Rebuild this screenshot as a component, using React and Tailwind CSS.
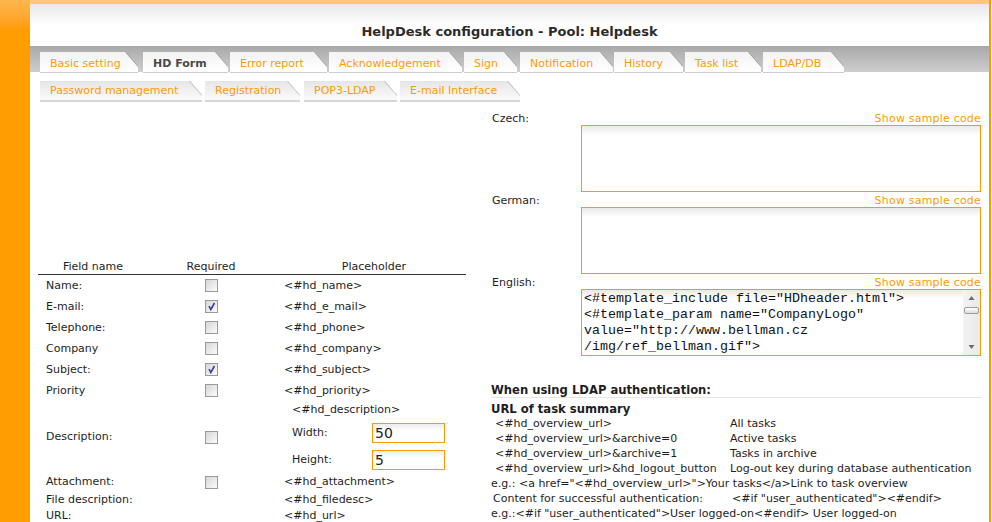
import React from 'react';

const font = "font-['DejaVu_Sans','Liberation_Sans',sans-serif]";

const tabsTop = [
  { label: 'Basic setting', cls: 'ml-[10px] w-[98px]' },
  { label: 'HD Form', cls: 'ml-[5px] w-[85px]', active: true },
  { label: 'Error report', cls: 'ml-[2px] w-[97px]' },
  { label: 'Acknowledgement', cls: 'ml-[2px] w-[133px]' },
  { label: 'Sign', cls: 'ml-[2px] w-[53px]' },
  { label: 'Notification', cls: 'ml-[3px] w-[93px]' },
  { label: 'History', cls: 'ml-[1px] w-[69px]' },
  { label: 'Task list', cls: 'ml-[2px] w-[76px]' },
  { label: 'LDAP/DB', cls: 'ml-[2px] w-[81px]' },
];

const tabsBottom = [
  { label: 'Password management', cls: 'ml-[10px] w-[162px]' },
  { label: 'Registration', cls: 'ml-[3px] w-[95px]' },
  { label: 'POP3-LDAP', cls: 'ml-[4px] w-[93px]' },
  { label: 'E-mail Interface', cls: 'ml-[3px] w-[120px]' },
];

const fields = [
  { label: 'Name:', code: '<#hd_name>', check: false },
  { label: 'E-mail:', code: '<#hd_e_mail>', check: true },
  { label: 'Telephone:', code: '<#hd_phone>', check: false },
  { label: 'Company', code: '<#hd_company>', check: false },
  { label: 'Subject:', code: '<#hd_subject>', check: true },
  { label: 'Priority', code: '<#hd_priority>', check: false },
];

const ldapRows = [
  ['<#hd_overview_url>', 'All tasks'],
  ['<#hd_overview_url>&archive=0', 'Active tasks'],
  ['<#hd_overview_url>&archive=1', 'Tasks in archive'],
  ['<#hd_overview_url>&hd_logout_button', 'Log-out key during database authentication'],
];

// záložka se zahnutým rohem
const Tab = ({ tab, upper }) => (
  <div
    className={`relative h-[21px] shrink-0 pl-[10px] flex items-center text-[11px] whitespace-nowrap [clip-path:polygon(0_0,calc(100%-12px)_0,100%_14px,100%_100%,0_100%)] ${tab.cls} ${
      upper
        ? 'pt-[4px] bg-gradient-to-b from-[#f3f3f3] to-[#ffffff] border-b border-[#cdcdcd]'
        : 'pt-[2px] bg-gradient-to-b from-[#e6e6e6] to-[#fbfbfb] border-b-2 border-[#d6d6d6]'
    } ${tab.active ? 'font-bold text-[#4a4a4a]' : 'text-[#ff9a00]'}`}
  >
    {tab.label}
    <svg className="absolute top-0 right-0 w-[13px] h-[15px]" viewBox="0 0 13 15">
      <polygon points="0,0 3,0 13,11 13,15" fill={upper ? '#8e8e8e' : '#bdbdbd'} />
    </svg>
  </div>
);

const Checkbox = ({ checked }) => (
  <div className="w-[13px] h-[13px] border border-[#9a9a9a] bg-gradient-to-br from-[#d6d6d6] to-[#fbfbfb] flex items-center justify-center">
    {checked && (
      <svg viewBox="0 0 11 11" className="w-[11px] h-[11px]">
        <path d="M3 5 L4.8 8.5 L8.5 2" fill="none" stroke="#3c3caa" strokeWidth="1.6" />
      </svg>
    )}
  </div>
);

const Field = ({ value }) => (
  <div className="w-[73px] h-[20px] border border-[#ff9900] bg-[linear-gradient(to_bottom,#ececec,#ffffff_7px)] pl-[2px] flex items-center text-[14px] text-[#222]">
    {value}
  </div>
);

const Area = ({ children }) => (
  <div className="relative h-[67px] w-[400px] border border-[#ff9900] bg-[linear-gradient(to_bottom,#e9e9e9,#ffffff_9px)]">
    {children}
  </div>
);

const LangBlock = ({ label, children }) => (
  <div className="flex">
    <div className="w-[90px] leading-[14px]">{label}</div>
    <div className="w-[400px]">
      <div className="h-[13px] leading-[13px] text-right text-[#ff9a00] tracking-[0.2px]">Show sample code</div>
      <Area>{children}</Area>
    </div>
  </div>
);

export default function App() {
  return (
    <div className={`w-[992px] h-[522px] overflow-hidden flex bg-white text-[11px] text-[#1e1e1e] ${font}`}>
      {/* levý oranžový pruh */}
      <div className="w-[30px] shrink-0 bg-gradient-to-b from-[#fdb64a] via-[#ff9c00] to-[#ff9c00] [background-size:100%_60px] bg-no-repeat bg-[#ff9c00]" />

      <div className="w-[961px] shrink-0 flex flex-col border-r-2 border-[#ff9900]">
        <div className="h-[4px] shrink-0 bg-[#fdc77d]" />
        <div className="h-[42px] shrink-0 flex items-end justify-center pb-[6px] bg-gradient-to-b from-[#e8e8e8] via-[#ffffff] to-[#ffffff]">
          <h1 className="text-[13px] font-bold text-[#2b2b2b] leading-[16px]">HelpDesk configuration - Pool: Helpdesk</h1>
        </div>

        {/* záložky */}
        <div className="h-[26px] shrink-0 bg-gradient-to-b from-[#a9a9a9] to-[#cecece] flex items-start pt-[6px] overflow-visible">
          {tabsTop.map(t => (
            <Tab key={t.label} tab={t} upper />
          ))}
        </div>
        <div className="h-[31px] shrink-0 flex items-start pt-[9px]">
          {tabsBottom.map(t => (
            <Tab key={t.label} tab={t} />
          ))}
        </div>

        <div className="flex shrink-0">
          {/* formulář */}
          <div className="ml-[8px] w-[428px] pt-[157px]">
            <div className="grid grid-cols-[110px_126px_192px] border-b border-[#333] h-[15px] leading-[14px]">
              <div className="text-center">Field name</div>
              <div className="text-center">Required</div>
              <div className="text-center pl-[8px]">Placeholder</div>
            </div>
            {fields.map(f => (
              <div key={f.label} className="grid grid-cols-[110px_126px_192px] h-[21px] items-center">
                <div className="pl-[8px] pt-[1px]">{f.label}</div>
                <div className="flex justify-center pl-[1px]"><Checkbox checked={f.check} /></div>
                <div className="pl-[10px] pt-[1px]">{f.code}</div>
              </div>
            ))}
            <div className="grid grid-cols-[110px_126px_192px] h-[72px] items-center">
              <div className="pl-[8px]">Description:</div>
              <div className="flex justify-center pl-[1px]"><Checkbox /></div>
              <div className="pl-[18px] pt-[2px] self-start">
                <div className="h-[14px] leading-[14px]">{'<#hd_description>'}</div>
                <div className="mt-[6px] flex items-center">
                  <span className="w-[80px]">Width:</span>
                  <Field value="50" />
                </div>
                <div className="mt-[7px] flex items-center">
                  <span className="w-[80px]">Height:</span>
                  <Field value="5" />
                </div>
              </div>
            </div>
            <div className="grid grid-cols-[110px_126px_192px] h-[19px] items-center">
              <div className="pl-[8px]">Attachment:</div>
              <div className="flex justify-center pl-[1px]"><Checkbox /></div>
              <div className="pl-[10px]">{'<#hd_attachment>'}</div>
            </div>
            <div className="grid grid-cols-[110px_126px_192px] h-[16px] items-center">
              <div className="pl-[8px] whitespace-nowrap">File description:</div>
              <div />
              <div className="pl-[10px]">{'<#hd_filedesc>'}</div>
            </div>
            <div className="grid grid-cols-[110px_126px_192px] h-[16px] items-center">
              <div className="pl-[8px]">URL:</div>
              <div />
              <div className="pl-[10px]">{'<#hd_url>'}</div>
            </div>
          </div>

          {/* jazykové šablony */}
          <div className="ml-[25px] w-[490px] pt-[9px]">
            <div className="flex flex-col gap-[2px] pl-[1px]">
              <LangBlock label="Czech:" />
              <LangBlock label="German:" />
              <LangBlock label="English:">
                <div className="pl-[2px] pt-[1px] pr-[20px] font-['Liberation_Mono',monospace] text-[13.33px] leading-[16px] text-[#111] whitespace-pre">
                  {'<#template_include file="HDheader.html">\n<#template_param name="CompanyLogo"\nvalue="http://www.bellman.cz\n/img/ref_bellman.gif">'}
                </div>
                <div className="absolute top-0 right-0 bottom-0 w-[17px] bg-gradient-to-r from-[#f3f3f3] to-[#e9e9e9] flex flex-col items-center">
                  <svg viewBox="0 0 17 17" className="w-[17px] h-[17px]">
                    <path d="M5.5 10 L8.5 6 L11.5 10 Z" fill="#6b6b6b" />
                  </svg>
                  <div className="w-[15px] h-[7px] rounded-[2px] border border-[#9c9c9c] bg-gradient-to-b from-[#ffffff] to-[#dcdcdc]" />
                  <div className="flex-1" />
                  <svg viewBox="0 0 17 17" className="w-[17px] h-[17px]">
                    <path d="M5.5 7 L8.5 11 L11.5 7 Z" fill="#6b6b6b" />
                  </svg>
                </div>
              </LangBlock>
            </div>

            <div className="mt-[27px] h-[15px] leading-[14px] border-b border-[#e4e4e4] text-[11.6px] font-bold">When using LDAP authentication:</div>
            <div className="mt-[4px] h-[14px] leading-[14px] text-[11.6px] font-bold">URL of task summary</div>
            <div className="leading-[15px]">
              {ldapRows.map(([a, b]) => (
                <div key={a} className="flex whitespace-nowrap">
                  <span className="w-[239px] pl-[4px]">{a}</span>
                  <span>{b}</span>
                </div>
              ))}
              <div className="whitespace-nowrap">{'e.g.: <a href="<#hd_overview_url>">Your tasks</a>Link to task overview'}</div>
              <div className="flex whitespace-nowrap">
                <span className="w-[241px] pl-[2px]">Content for successful authentication:</span>
                <span>{'<#if "user_authenticated"><#endif>'}</span>
              </div>
              <div className="whitespace-nowrap">{'e.g.:<#if "user_authenticated">User logged-on<#endif> User logged-on'}</div>
            </div>
          </div>
        </div>
      </div>
    </div>
  );
}
